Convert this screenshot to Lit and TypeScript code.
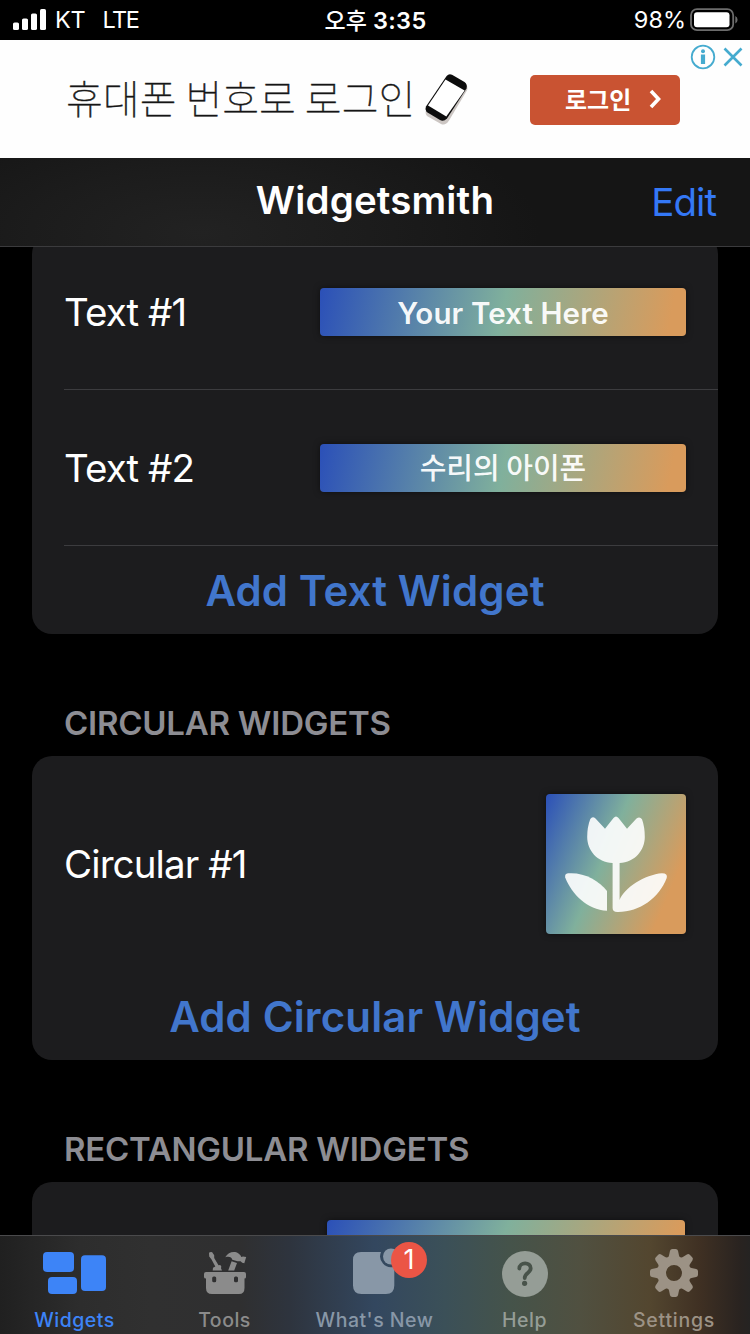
import { LitElement, html, css, svg } from "lit";
import { customElement } from "lit/decorators.js";

@customElement("app-root")
export class AppRoot extends LitElement {
  static styles = css`
    :host {
      display: flex;
      flex-direction: column;
      width: 750px;
      height: 1334px;
      overflow: hidden;
      background: #000;
      color: #fff;
      font-family: Inter, "Noto Sans CJK KR", sans-serif;
      box-sizing: border-box;
    }
    * { box-sizing: border-box; }
    svg { display: block; flex: none; }
    span, h1, h2, button { white-space: pre; }
    button { appearance: none; border: 0; padding: 0; margin: 0; background: none; font-family: inherit; color: inherit; }
    h1, h2 { margin: 0; }

    .status { flex: none; height: 40px; display: grid; grid-template-columns: 1fr auto 1fr; align-items: center; padding: 0 12px 0 13px; background: #000; }
    .carrier { display: flex; align-items: center; font-size: 23.5px; line-height: 40px; }
    .carrier .kt { margin-left: 8px; letter-spacing: -0.2px; }
    .carrier .lte { margin-left: 17px; letter-spacing: -1.5px; }
    .clock { font-size: 23.5px; font-weight: 600; line-height: 38px; letter-spacing: 0.3px; }
    .clock .ampm { font-family: "Noto Sans CJK KR", sans-serif; font-weight: 500; font-size: 23px; letter-spacing: 0; }
    .power { display: flex; align-items: center; justify-content: flex-end; font-size: 23.5px; line-height: 40px; }
    .power span { margin-right: 4px; letter-spacing: 0; }

    .ad { flex: none; height: 118px; background: #fefefe; display: flex; align-items: center; padding-left: 66px; color: #111; position: relative; }
    .ad .copy { font-family: "Noto Sans CJK KR", sans-serif; font-weight: 100; font-size: 40px; line-height: 60px; letter-spacing: 0.05px; width: 354px; padding-bottom: 4px; -webkit-text-stroke: 0.5px #222; }
    .ad .cta { width: 150px; height: 50px; margin-left: 58px; margin-top: 2px; border-radius: 5px; background: #c95332; color: #fff; display: flex; align-items: center; padding-left: 35px; gap: 17px; }
    .ad .cta span { font-family: "Noto Sans CJK KR", sans-serif; font-weight: 700; font-size: 24px; line-height: 46px; letter-spacing: 0; padding-bottom: 3px; }
    .choices { position: absolute; top: 4px; right: 6px; }

    .nav { flex: none; height: 89px; display: grid; grid-template-columns: 1fr auto 1fr; align-items: center; border-bottom: 1px solid #3b3b3d; padding: 0 35px; background: radial-gradient(ellipse 340px 130px at 200px 75px, #222222 0%, #1c1c1c 50%, #151515 100%); }
    .nav h1 { grid-column: 2; font-size: 38.5px; font-weight: 600; line-height: 46px; margin-top: -5px; letter-spacing: 0.15px; }
    .nav .edit { justify-self: end; font-size: 38.5px; line-height: 46px; color: #3478f6; letter-spacing: -1px; margin-right: -1px; }

    .list { flex: 1; min-height: 0; overflow: hidden; padding: 0 32px; }
    .card { background: #1c1c1e; border-radius: 20px; padding-left: 32px; }
    .card.first { margin-top: -13px; }
    .row { display: flex; align-items: center; justify-content: space-between; padding-right: 32px; }
    .row.text { height: 156px; border-bottom: 1px solid #3c3c3f; }
    .row.circular { height: 216px; }
    .row.rect { height: 300px; align-items: flex-start; justify-content: flex-end; padding-top: 38px; padding-right: 33px; }
    .label { font-size: 38.5px; line-height: 46px; letter-spacing: -0.9px; }
    .bar { width: 366px; height: 48px; border-radius: 4px; display: flex; align-items: center; justify-content: center; font-size: 29.5px; font-weight: 600; color: rgba(255,255,255,.95); box-shadow: 0 0 6px rgba(0,0,0,.5); background: linear-gradient(101deg, #2b50b8 0%, #80b09c 50%, #d99b5c 95%); }
    .bar span { padding-top: 2px; letter-spacing: 0.1px; }
    .bar .ko { font-family: "Noto Sans CJK KR", sans-serif; font-weight: 500; font-size: 29px; line-height: 44px; padding: 0 0 3px; letter-spacing: 0; }
    .tile { width: 140px; height: 140px; border-radius: 4px; box-shadow: 0 0 6px rgba(0,0,0,.5); background: linear-gradient(113deg, #2b50b8 0%, #80b09c 42.5%, #d99b5c 83%); }
    .wide { width: 358px; height: 160px; border-radius: 4px; box-shadow: 0 0 6px rgba(0,0,0,.5); background: linear-gradient(113deg, #2b50b8 0%, #80b09c 43%, #d99b5c 84%); }
    .add { display: block; width: 100%; height: 88px; padding: 1px 32px 0 0; font-size: 42px; font-weight: 600; line-height: 88px; letter-spacing: 0.13px; color: #4176cc; text-align: center; }
    .heading { height: 122px; padding: 69px 0 0 32px; font-size: 33px; line-height: 40px; font-weight: 600; letter-spacing: -0.25px; color: #8d8d93; }

    .tabs { flex: none; height: 99px; display: grid; grid-template-columns: repeat(5, 150px); border-top: 1px solid #4a4a4c; color: #8b8b8b; background: linear-gradient(90deg, #202020 0, #2d2d2d 80px, #303030 150px, #2f2f30 240px, #2e343e 290px, #33475f 375px, #3b5058 445px, #45534a 510px, #505040 580px, #53462f 650px, #3f3023 700px, #292320 740px, #252322 750px); }
    .tab { display: flex; flex-direction: column; align-items: center; position: relative; padding-top: 10px; }
    .tab.on { color: #3d84f7; }
    .tab.new { color: #8897a7; }
    .tab.help { color: #959d96; }
    .tab.gear { color: #9c9285; }
    .tab .name { font-size: 19.5px; line-height: 24px; font-weight: 500; letter-spacing: 0.5px; margin: 8px 1px 0 0; }
    .tab.gear .name { letter-spacing: 0.75px; margin-right: 2px; }
    .badge { position: absolute; left: 91px; top: 6px; width: 36px; height: 36px; border-radius: 50%; background: #eb5545; color: #fff; font-size: 27px; line-height: 36px; text-align: center; }
  `;

  private tooth(angle: number) {
    return svg`<path transform=${`rotate(${angle} 31 27)`} d="M24.6 13 L26 9.5 L27 4.8 Q27.5 3 29.3 3 H32.7 Q34.5 3 35 4.8 L36 9.5 L37.4 13 Z"/>`;
  }

  render() {
    return html`
      <div class="status">
        <div class="carrier">
          <svg width="34" height="22" viewBox="0 0 34 22" fill="#fff">
            <rect x="0" y="13.5" width="6" height="7.5" rx="1.6" /><rect x="9" y="9.5" width="6" height="11.5" rx="1.6" />
            <rect x="18" y="4.5" width="6" height="16.5" rx="1.6" /><rect x="27" y="0" width="6" height="21" rx="1.6" />
          </svg>
          <span class="kt">KT</span><span class="lte">LTE</span>
        </div>
        <span class="clock"><span class="ampm">오후</span> 3:35</span>
        <div class="power">
          <span>98%</span>
          <svg width="48" height="24" viewBox="0 0 48 24">
            <rect x="1" y="1.2" width="42.2" height="21" rx="6" fill="none" stroke="#6c6c6c" stroke-width="1.8" />
            <rect x="4" y="4.2" width="35.5" height="15" rx="3" fill="#fff" />
            <path d="M45.3 8 Q47.6 9.3 47.6 11.8 T45.3 15.6Z" fill="#6c6c6c" />
          </svg>
        </div>
      </div>

      <div class="ad">
        <span class="copy">휴대폰 번호로 로그인</span>
        <svg width="52" height="56" viewBox="420 70 52 56">
          <path d="M448.5 76 Q451 73.5 454 75.2 L465.5 83 Q468 85 467.2 89 L449 119.5 Q445.5 125 441 123 L427 115 Q424.5 112 426.5 108.5Z" fill="#ccc6c3" />
          <path d="M446.6 75 Q449 72.3 452 73.8 L464.5 81 Q467.7 83.3 466.5 87.5 L447 117.5 Q443.5 121 440 119 L427.5 111.5 Q424.5 109 426 105.5Z" fill="#0c0c0c" />
          <path d="M445.5 78.6 L464.6 89.5 L446.3 115.6 L428 104.4Z" fill="#fff" />
        </svg>
        <div class="cta">
          <span>로그인</span>
          <svg width="14" height="22" viewBox="0 0 14 22"><path d="M3 2 L10.5 10 L3 18" fill="none" stroke="#fff" stroke-width="3.6" /></svg>
        </div>
        <svg class="choices" width="54" height="26" viewBox="690 44 54 26" fill="none" stroke="#45abcf">
          <circle cx="703" cy="57" r="11.3" stroke-width="1.8" />
          <path d="M703 54.5 V64" stroke-width="4.2" /><circle cx="703" cy="51.3" r="2" fill="#45abcf" stroke="none" />
          <path d="M724.5 48.5 L741.5 65.5 M741.5 48.5 L724.5 65.5" stroke-width="2.6" />
        </svg>
      </div>

      <div class="nav"><h1>Widgetsmith</h1><button class="edit">Edit</button></div>

      <div class="list">
        <div class="card first">
          <div class="row text"><span class="label">Text #1</span><div class="bar"><span>Your Text Here</span></div></div>
          <div class="row text"><span class="label">Text #2</span><div class="bar"><span class="ko">수리의 아이폰</span></div></div>
          <button class="add">Add Text Widget</button>
        </div>
        <h2 class="heading">CIRCULAR WIDGETS</h2>
        <div class="card">
          <div class="row circular">
            <span class="label">Circular #1</span>
            <div class="tile">
              <svg width="140" height="140" viewBox="0 0 140 140" fill="#fff" fill-opacity=".9">
                <path d="M44.3 25 Q46.5 22 49.5 24.5 L59 34.7 L67.5 24 Q70 20.8 72.5 24 L81 34.7 L90.5 24.5 Q93.8 22 96 25.3 Q98.8 33 98.8 43 C98.8 56 89 68.5 73.6 69 V106 C78 94 99 80.5 116 79.3 Q122 79.3 120.7 84 C113 104 94 117.8 72 118 Q66.6 118.3 66.6 114 V69 C51 68.5 41.2 56 41.2 43 Q41.2 33 44.3 25Z" />
                <path d="M22 79.3 C38 78 53 86.5 61 97 V116.8 C41 115.5 26 100.5 19.2 83.5 Q18.5 79.8 22 79.3Z" />
              </svg>
            </div>
          </div>
          <button class="add">Add Circular Widget</button>
        </div>
        <h2 class="heading">RECTANGULAR WIDGETS</h2>
        <div class="card"><div class="row rect"><div class="wide"></div></div></div>
      </div>

      <div class="tabs">
        <div class="tab on">
          <svg width="64" height="54" viewBox="0 0 64 54" fill="currentColor">
            <rect x="0" y="6" width="31" height="20" rx="4" /><rect x="5" y="31" width="29" height="17" rx="4" /><rect x="38" y="9.3" width="25" height="35.7" rx="4" />
          </svg>
          <span class="name">Widgets</span>
        </div>
        <div class="tab">
          <svg width="64" height="54" viewBox="0 0 64 54" fill="currentColor">
            <path fill-rule="evenodd" d="M13 26 H51 Q53 26 53 28 V31 Q53 32.5 51.5 32.5 V42 Q51.5 48 46 48 H19 Q13 48 13 42 V32.5 Q11 32.5 11 31 V28 Q11 26 13 26Z M20.7 30.5 Q19.2 30.5 19.2 32 V34.8 Q19.2 36.3 20.7 36.3 H21.7 Q23.2 36.3 23.2 34.8 V32 Q23.2 30.5 21.7 30.5Z M42.5 30.5 Q41 30.5 41 32 V34.8 Q41 36.3 42.5 36.3 H43.5 Q45 36.3 45 34.8 V32 Q45 30.5 43.5 30.5Z" />
            <path d="M16 6.8 Q17.5 5.5 19.2 6.2 L21.2 9.3 L21.2 12 L25.5 19.3 L27.3 19 L28.3 20.5 L28 22.3 L29 24.5 H19.7 L20 21.8 L22.3 20.5 L18.4 13.2 L16.2 10.5Z" />
            <path d="M32.3 11.2 C35 6.5 41 4.5 45.5 7.5 Q48 9 48.3 11 L50 10.5 L53.2 11 L51.3 17.3 L49.2 16.8 L47.6 15.3 L44.5 15.3 L39.3 13.8 C38.8 11.3 36.5 10.3 32.3 11.2Z M38.6 15.3 L44 16.9 L41.2 24.5 H35.2Z" />
          </svg>
          <span class="name">Tools</span>
        </div>
        <div class="tab new">
          <svg width="64" height="54" viewBox="0 0 64 54" fill="currentColor">
            <path d="M18 6 H38 A11 11 0 0 0 51.3 20.8 V39.5 Q51.3 48 43 48 H18.5 Q10 48 10 39.5 V14 Q10 6 18 6Z" /><circle cx="48" cy="10.5" r="8" />
          </svg>
          <span class="name">What's New</span>
          <span class="badge">1</span>
        </div>
        <div class="tab help">
          <svg width="64" height="54" viewBox="0 0 64 54">
            <circle cx="32" cy="28" r="23" fill="currentColor" />
            <path d="M26.3 22.5 C26.5 15.7 37.7 15.7 37.7 22.2 C37.7 27 31.7 27 31.7 32" fill="none" stroke="#48534a" stroke-width="3.8" stroke-linecap="round" /><circle cx="31.6" cy="37.3" r="2.6" fill="#48534a" />
          </svg>
          <span class="name">Help</span>
        </div>
        <div class="tab gear">
          <svg width="64" height="54" viewBox="0 0 64 54" fill="currentColor">
            ${[0, 45, 90, 135, 180, 225, 270, 315].map((a) => this.tooth(a))}
            <path fill-rule="evenodd" d="M31 10 A17 17 0 1 0 31 44 A17 17 0 1 0 31 10Z M31 19 A8 8 0 1 1 31 35 A8 8 0 1 1 31 19Z" />
          </svg>
          <span class="name">Settings</span>
        </div>
      </div>
    `;
  }
}
